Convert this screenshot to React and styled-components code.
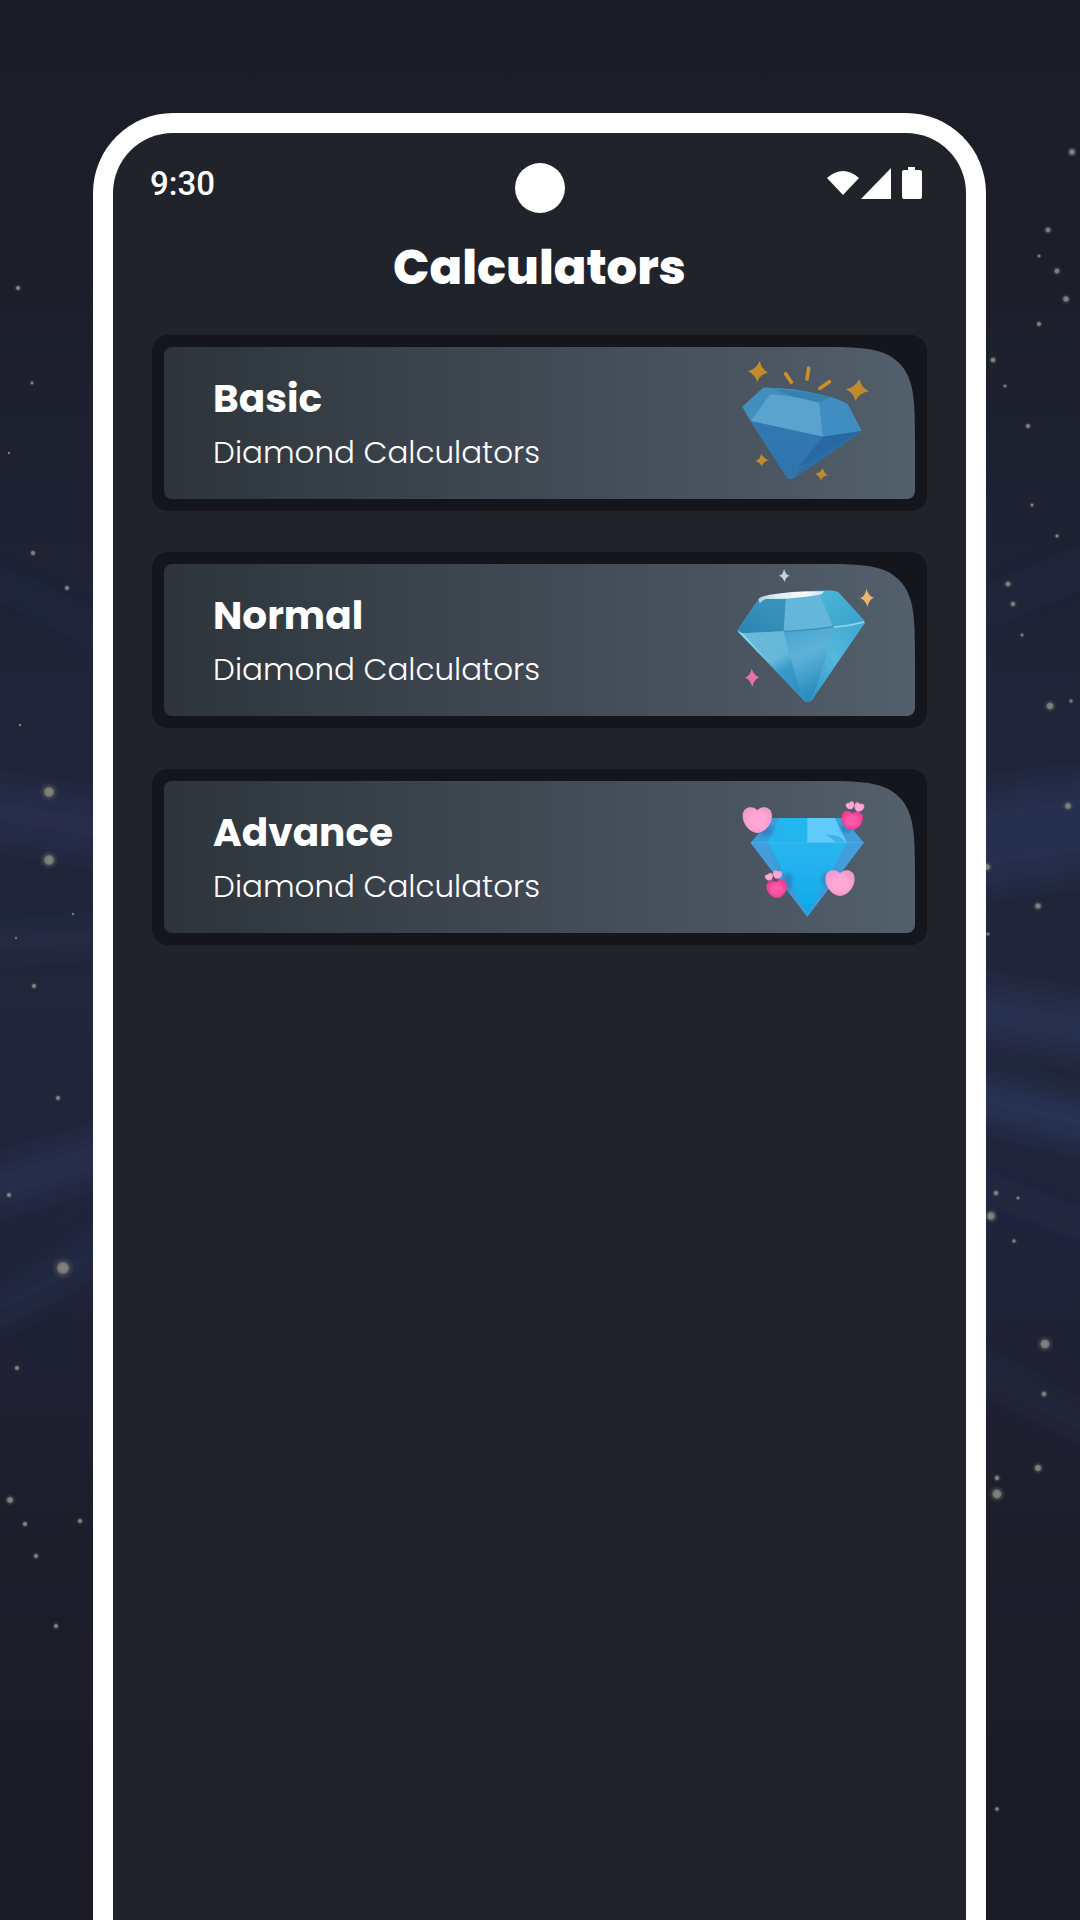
import React from 'react'
import styled, { createGlobalStyle } from 'styled-components';

const GlobalStyle = createGlobalStyle`
    * {
        box-sizing: border-box;
    }

    body {
        margin: 0;
        background: #1b1c27;
        color: #fff;
        font-family: Poppins, Inter, "Open Sans", sans-serif;
    }
`;

const Page = styled.div`
    position: relative;
    min-height: 100vh;
    display: flex;
    justify-content: center;
    padding: 113px 94px 0 93px;
    overflow: hidden;
    background: linear-gradient(#1b1c26 0%, #1c1e2a 14%, #20253a 38%, #21263b 52%, #20243a 64%, #1d1e2b 80%, #1b1b26 100%);
`;

const Sky = styled.svg`
    position: absolute;
    inset: 0;
    width: 100%;
    height: 100%;
`;

const Phone = styled.div`
    position: relative;
    width: 100%;
    border: 20px solid #fff;
    border-bottom: none;
    border-radius: 80px 80px 0 0;
    background: #21232b;
`;

const StatusBar = styled.header`
    display: grid;
    grid-template-columns: 1fr 50px 1fr;
    align-items: start;
    padding: 30px 37px 0;
`;

const Time = styled.time`
    font-family: Roboto, sans-serif;
    font-size: 33px;
    font-weight: 500;
    line-height: 42px;
`;

const Camera = styled.div`
    height: 50px;
    border-radius: 50%;
    background: #fff;
`;

const StatusIcons = styled.svg`
    width: 105px;
    height: 40px;
    justify-self: end;
    fill: #fff;
`;

const Title = styled.h1`
    margin: 25px 0 37px;
    font-size: 48px;
    font-weight: 800;
    line-height: 60px;
    text-align: center;
`;

const CardList = styled.main`
    display: flex;
    flex-direction: column;
    gap: 41px;
    padding: 0 39px;
`;

const Card = styled.button`
    display: block;
    width: 100%;
    padding: 12px;
    border: none;
    border-radius: 16px;
    background: #14161b;
    color: inherit;
    font-family: inherit;
    text-align: left;
    cursor: pointer;
`;

const CardFace = styled.span`
    display: flex;
    align-items: center;
    justify-content: space-between;
    padding: 0 40px 0 49px;
    border-radius: 8px 100px 8px 8px;
    corner-top-right-shape: squircle;
    background: linear-gradient(90deg, #2d353b 0%, #414954 50%, #535f6c 100%);
`;

const CardText = styled.span`
    display: flex;
    flex-direction: column;
    padding-top: 2px;
`;

const CardTitle = styled.strong`
    font-size: 39px;
    font-weight: 700;
    line-height: 56px;
`;

const CardSubtitle = styled.span`
    font-size: 31px;
    font-weight: 300;
    line-height: 50px;
`;

const Picture = styled.svg`
    width: 150px;
    height: 152px;
`;

// x, y, radius
const stars = [
    [18, 288, 2], [32, 383, 1.5], [9, 453, 1], [33, 553, 2], [67, 588, 2], [20, 725, 1],
    [49, 792, 5], [49, 860, 5], [73, 914, 1], [16, 938, 1], [34, 986, 2], [58, 1098, 2],
    [9, 1195, 2], [63, 1268, 6], [17, 1368, 2], [10, 1500, 3], [25, 1524, 2], [80, 1521, 2],
    [36, 1556, 2], [56, 1626, 2], [1072, 152, 3], [1048, 230, 2.5], [1039, 256, 1.5],
    [1057, 271, 2.5], [1066, 299, 2.8], [1039, 324, 2], [993, 360, 2.4], [1005, 386, 1.5],
    [1028, 426, 2], [1032, 505, 1.5], [1057, 536, 1.6], [1008, 584, 2.4], [1013, 604, 2.2],
    [1022, 635, 1.5], [1050, 706, 3.4], [1071, 701, 1.6], [1068, 806, 3], [987, 867, 3],
    [1038, 906, 2.8], [988, 934, 1.5], [996, 1193, 2.2], [1018, 1198, 1.5], [991, 1216, 4],
    [1014, 1241, 1.7], [1045, 1344, 4.5], [1044, 1394, 2.3], [1038, 1468, 3.2],
    [997, 1478, 2.2], [997, 1494, 4.5], [997, 1809, 1.8],
];

const NightSky = () => (
    <Sky viewBox="0 0 1080 1920" preserveAspectRatio="xMidYMid slice" aria-hidden="true">
        <defs>
            <filter id="beam" x="-20%" y="-20%" width="140%" height="140%">
                <feGaussianBlur stdDeviation="15" />
            </filter>
            <radialGradient id="star">
                <stop offset="0" stopColor="#858783" />
                <stop offset="0.4" stopColor="#777976" />
                <stop offset="0.6" stopColor="#66685f" stopOpacity="0.3" />
                <stop offset="1" stopColor="#66685f" stopOpacity="0" />
            </radialGradient>
        </defs>
        <g filter="url(#beam)" fill="none" stroke="#2f3c68" strokeOpacity="0.45">
            <path d="M-40 575 Q50 590 140 670" strokeWidth="12" strokeOpacity="0.3" />
            <path d="M-40 805 L140 835" strokeWidth="50" strokeOpacity="0.38" />
            <path d="M-40 945 L140 935" strokeWidth="16" strokeOpacity="0.35" />
            <path d="M-40 1195 Q50 1175 140 1140" strokeWidth="32" strokeOpacity="0.55" />
            <path d="M-40 1325 Q50 1290 140 1220" strokeWidth="26" strokeOpacity="0.35" />
            <path d="M940 625 Q1030 590 1120 550" strokeWidth="18" strokeOpacity="0.3" />
            <path d="M940 845 L1120 820" strokeWidth="90" />
            <path d="M940 1005 L1120 1035" strokeWidth="44" strokeOpacity="0.5" />
            <path d="M940 1090 Q1030 1110 1120 1132" strokeWidth="32" strokeOpacity="0.75" />
            <path d="M940 1170 L1120 1240" strokeWidth="14" strokeOpacity="0.3" />
            <path d="M940 1350 L1120 1440" strokeWidth="24" strokeOpacity="0.25" />
        </g>
        {stars.map(([x, y, r]) => (
            <circle key={`${x}-${y}`} cx={x} cy={y} r={r * 2} fill="url(#star)" />
        ))}
    </Sky>
)

const BasicDiamond = () => (
    <Picture viewBox="15 21 450 456" aria-hidden="true">
        <defs>
            <linearGradient id="basicLower" x1="0" y1="0" x2="0" y2="1">
                <stop offset="0" stopColor="#3179b0" />
                <stop offset="1" stopColor="#2f75ad" />
            </linearGradient>
            <linearGradient id="basicGold" x1="0" y1="0" x2="1" y2="1">
                <stop offset="0" stopColor="#c7922f" />
                <stop offset="1" stopColor="#bb8526" />
            </linearGradient>
        </defs>
        <path d="M130 143 Q220 142 305 165 Q350 174 383 193 L425 273 Q320 350 217 416 Q207 420 200 411 L92 243 L67 200 Z" fill="#3e8dc0" />
        <path d="M130 143 Q220 142 305 165 Q350 174 383 193 L298 189 L150 163 L92 243 L67 200 Z" fill="#428fbd" />
        <path d="M160 147 Q240 149 330 172 L376 189 L298 189 L220 170 Z" fill="#3681ad" />
        <path d="M150 163 Q225 168 298 189 L309 290 L92 243 Z" fill="#5aa3cf" />
        <path d="M298 189 L330 172 Q360 179 383 193 L425 273 L309 290 Z" fill="#3f8dc1" />
        <path d="M92 243 L309 290 L217 414 Q207 421 200 411 Z" fill="url(#basicLower)" />
        <path d="M309 290 L425 273 Q330 345 217 416 Z" fill="#2d6da5" />
        <path d="M309 290 L425 273 L232 384 Z" fill="#2969a3" />
        <g fill="url(#basicGold)">
            <path d="M119 63 Q124 87 144 98 Q120 103 112 127 Q105 104 84 93 Q109 88 119 63 Z" />
            <path d="M418 117 Q423 143 447 154 Q417 160 406 183 Q401 158 378 148 Q407 141 418 117 Z" />
            <path d="M124 341 Q129 354 145 361 Q130 365 126 379 Q119 367 107 362 Q121 357 124 341 Z" />
            <path d="M308 384 Q311 399 324 406 Q309 408 303 421 Q299 409 287 401 Q302 399 308 384 Z" />
        </g>
        <g stroke="#c8902b" strokeWidth="11" strokeLinecap="round">
            <path d="M197 101 L214 127" />
            <path d="M266 84 L261 117" />
            <path d="M300 145 L328 125" />
        </g>
    </Picture>
)

const NormalDiamond = () => (
    <Picture viewBox="15 27 450 456" aria-hidden="true">
        <defs>
            <linearGradient id="normalLeft" x1="0.2" y1="0" x2="0.8" y2="1">
                <stop offset="0" stopColor="#6cb9d8" />
                <stop offset="0.45" stopColor="#65b7da" />
                <stop offset="0.62" stopColor="#3a9bc9" />
                <stop offset="1" stopColor="#2d8fc3" />
            </linearGradient>
            <linearGradient id="normalMiddle" x1="0.2" y1="0" x2="0.5" y2="1">
                <stop offset="0" stopColor="#48a6cf" />
                <stop offset="0.4" stopColor="#5db2d9" />
                <stop offset="1" stopColor="#2588bd" />
            </linearGradient>
            <linearGradient id="normalRight" x1="0.8" y1="0" x2="0.1" y2="1">
                <stop offset="0" stopColor="#40abd1" />
                <stop offset="0.5" stopColor="#55b7dc" />
                <stop offset="1" stopColor="#2f98c9" />
            </linearGradient>
            <linearGradient id="normalTop" x1="0" y1="0" x2="1" y2="1">
                <stop offset="0" stopColor="#4cb5d9" />
                <stop offset="1" stopColor="#39a1c9" />
            </linearGradient>
            <linearGradient id="normalDark" x1="0" y1="1" x2="1" y2="0">
                <stop offset="0" stopColor="#2b83ae" />
                <stop offset="1" stopColor="#3a97c1" />
            </linearGradient>
            <linearGradient id="normalShine" x1="0" y1="0" x2="1" y2="0">
                <stop offset="0" stopColor="#a9d3e3" />
                <stop offset="0.25" stopColor="#dcedf2" />
                <stop offset="0.7" stopColor="#f6fafb" />
                <stop offset="1" stopColor="#c3e5f0" />
            </linearGradient>
        </defs>
        <path d="M118 130 Q220 104 345 107 L355 112 L434 199 L434 205 L276 434 Q264 446 253 437 L53 230 L53 224 Z" fill="#4cacd2" />
        <path d="M120 130 L198 130 L191 229 L66 235 L53 225 Z" fill="url(#normalDark)" />
        <path d="M198 130 L303 119 L339 214 L191 229 Z" fill="#64b6da" />
        <path d="M300 120 L312 108 Q342 105 355 112 L434 199 L339 214 Z" fill="url(#normalTop)" />
        <path d="M116 131 Q122 124 150 119 Q225 107 314 109 Q308 118 296 120 Q240 128 198 131 L138 132 Q128 135 119 146 Z" fill="url(#normalShine)" />
        <path d="M62 235 L191 229 Q216 335 253 437 Z" fill="url(#normalLeft)" />
        <path d="M191 229 L341 214 Q318 320 278 428 Q264 446 253 437 Q216 335 191 229 Z" fill="url(#normalMiddle)" />
        <path d="M341 214 L434 202 L276 434 Q318 320 341 214 Z" fill="url(#normalRight)" />
        <path d="M53 229 L68 234 L150 327 Z" fill="#a1d9eb" fillOpacity="0.8" />
        <path d="M191 229 Q280 226 341 215" fill="none" stroke="#338eb7" strokeWidth="3" />
        <path d="M341 216 Q390 213 432 201" fill="none" stroke="#93d9ed" strokeWidth="4" />
        <path d="M192 41 Q196 59 210 62 Q196 65 194 82 Q189 65 176 62 Q190 59 192 41 Z" fill="#b7d6df" />
        <path d="M439 101 Q446 124 462 128 Q447 132 443 156 Q436 135 420 129 Q436 124 439 101 Z" fill="#ecb56d" />
        <path d="M95 341 Q102 362 118 367 Q103 372 97 395 Q90 373 75 368 Q90 363 95 341 Z" fill="#e372aa" />
    </Picture>
)

const heartPath = 'M0 -29 C12 -44 44 -42 44 -12 C44 14 20 39 0 39 C-20 39 -44 14 -44 -12 C-44 -42 -12 -44 0 -29 Z';

const AdvanceDiamond = () => (
    <Picture viewBox="15 30 450 456" aria-hidden="true">
        <defs>
            <linearGradient id="advanceCore" x1="0" y1="0" x2="0" y2="1">
                <stop offset="0" stopColor="#2cb9f1" />
                <stop offset="0.5" stopColor="#23b2ef" />
                <stop offset="1" stopColor="#0ca8e8" />
            </linearGradient>
            <radialGradient id="heartPale">
                <stop offset="0.5" stopColor="#ffa8d7" />
                <stop offset="1" stopColor="#f49aca" />
            </radialGradient>
            <radialGradient id="heartHot">
                <stop offset="0.4" stopColor="#ff58aa" />
                <stop offset="1" stopColor="#ec3d92" />
            </radialGradient>
            <filter id="soft" x="-50%" y="-50%" width="200%" height="200%">
                <feGaussianBlur stdDeviation="7" />
            </filter>
            <clipPath id="gem">
                <path d="M155 141 H370 L432 215 L262 439 L91 215 Z" />
            </clipPath>
        </defs>
        <g clipPath="url(#gem)">
            <path d="M155 141 H370 L432 215 L262 439 L91 215 Z" fill="#3c9cdb" />
            <path d="M180 141 H345 L382 215 L262 430 L142 215 Z" fill="url(#advanceCore)" />
            <path d="M180 141 H262 V215 H142 Z" fill="#22b5ee" />
            <path d="M262 141 H345 L382 215 H262 Z" fill="#60cbfb" />
            <path d="M345 141 H370 L432 215 H382 Z" fill="#419edb" />
            <path d="M315 192 Q348 185 378 213 H345 Q335 199 315 192 Z" fill="#3fb2ea" />
            <path d="M91 215 H142 L166 300 L155 300 Z" fill="#439eda" />
            <path d="M432 215 H382 L350 290 L371 296 Z" fill="#439fdc" />
            <g filter="url(#soft)" fill="#2c78b5" fillOpacity="0.75">
                <ellipse cx="138" cy="180" rx="23" ry="15" />
                <ellipse cx="205" cy="332" rx="12" ry="27" />
                <ellipse cx="318" cy="325" rx="12" ry="20" />
                <ellipse cx="378" cy="170" rx="16" ry="16" />
            </g>
            <path d="M91 215 H432" stroke="#50b9ed" strokeWidth="2" />
        </g>
        <path d={heartPath} transform="translate(112 147)" fill="url(#heartPale)" />
        <path d={heartPath} transform="translate(360 336)" fill="url(#heartPale)" />
        <path d={heartPath} transform="translate(396 149) rotate(5) scale(0.73)" fill="url(#heartHot)" />
        <path d={heartPath} transform="translate(171 354) rotate(-8) scale(0.7)" fill="url(#heartHot)" />
        <path d={heartPath} transform="translate(391 104) rotate(-25) scale(0.29)" fill="url(#heartPale)" />
        <path d={heartPath} transform="translate(417 109) rotate(18) scale(0.34)" fill="url(#heartPale)" />
        <path d={heartPath} transform="translate(148 318) rotate(-28) scale(0.28)" fill="url(#heartPale)" />
        <path d={heartPath} transform="translate(172 311) rotate(12) scale(0.32)" fill="url(#heartPale)" />
    </Picture>
)

const calculators = [
    { name: 'Basic', Diamond: BasicDiamond },
    { name: 'Normal', Diamond: NormalDiamond },
    { name: 'Advance', Diamond: AdvanceDiamond },
];

const App = () => {
    return (
        <Page>
            <GlobalStyle />
            <NightSky />
            <Phone>
                <StatusBar>
                    <Time>9:30</Time>
                    <Camera />
                    <StatusIcons viewBox="0 0 105 40" aria-hidden="true">
                        <path d="M3 15 Q19 1 35 15 L19 32 Z" />
                        <path d="M37 36 L67 5 V36 Z" />
                        <path d="M84 4 H91 V7 H96 Q98 7 98 9 V34 Q98 36 96 36 H80 Q78 36 78 34 V9 Q78 7 80 7 H84 Z" />
                    </StatusIcons>
                </StatusBar>
                <Title>Calculators</Title>
                <CardList>
                    {calculators.map(({ name, Diamond }) => (
                        <Card key={name} type="button">
                            <CardFace>
                                <CardText>
                                    <CardTitle>{name}</CardTitle>
                                    <CardSubtitle>Diamond Calculators</CardSubtitle>
                                </CardText>
                                <Diamond />
                            </CardFace>
                        </Card>
                    ))}
                </CardList>
            </Phone>
        </Page>
    )
}

export default App
